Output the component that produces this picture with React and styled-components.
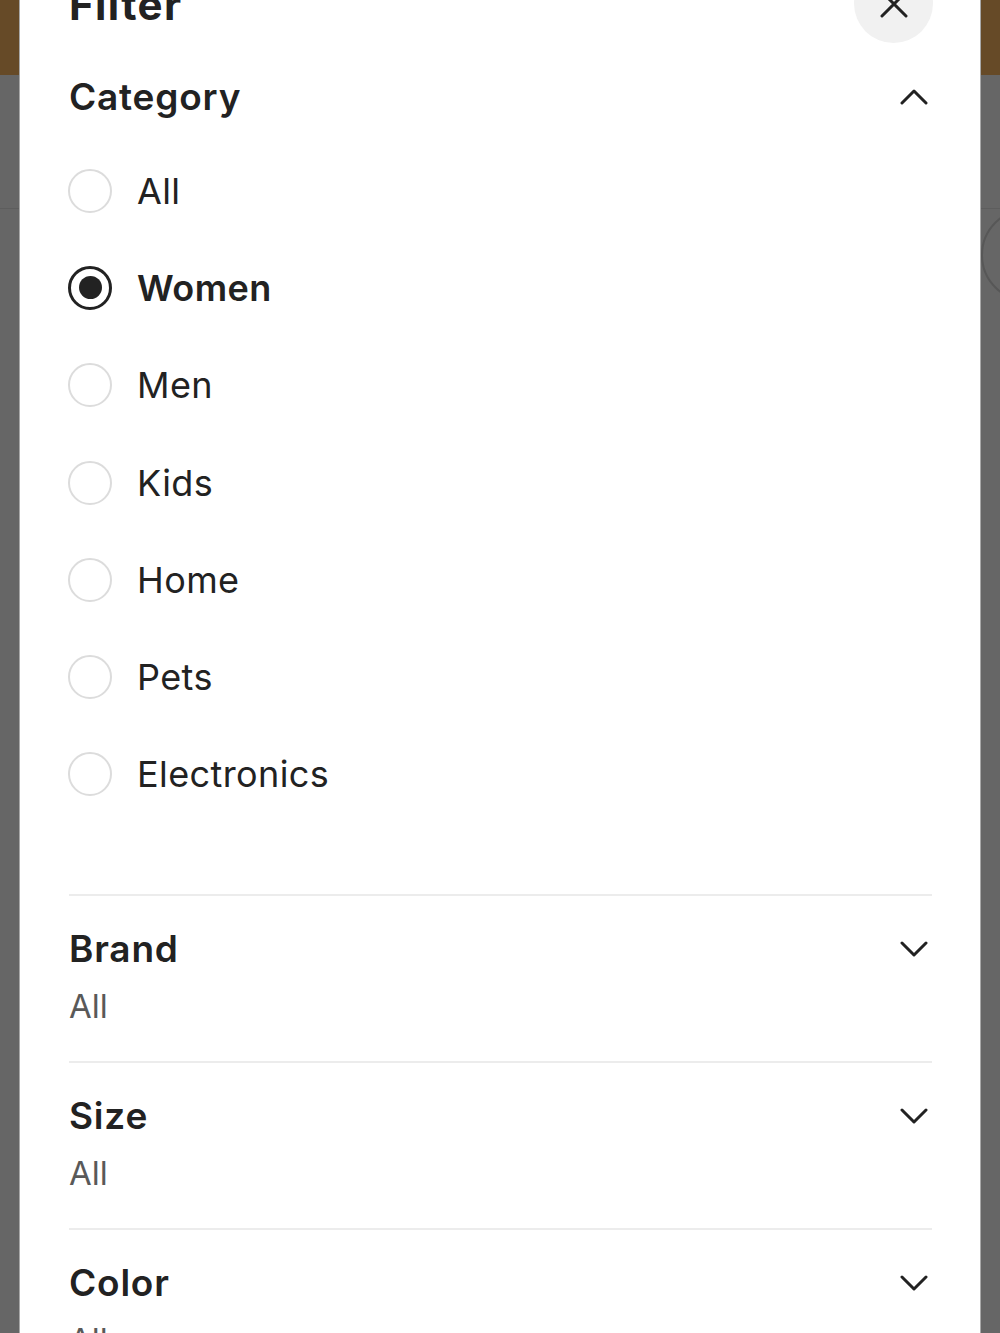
import React from "react";
import styled, { createGlobalStyle } from "styled-components";

const GlobalStyle = createGlobalStyle`
  html, body {
    margin: 0;
    padding: 0;
    background: #666666;
  }
  body {
    font-family: Inter, "Noto Sans", "Liberation Sans", sans-serif;
    color: #222222;
    -webkit-font-smoothing: antialiased;
  }
  * {
    box-sizing: border-box;
  }
`;

const categories = ["All", "Women", "Men", "Kids", "Home", "Pets", "Electronics"];
const sections = ["Brand", "Size", "Color"];

const Chevron = ({ up }) => (
  <svg width="28" height="16" viewBox="0 0 28 16" fill="none">
    <polyline
      points={up ? "2,14 14,2 26,14" : "2,2 14,14 26,2"}
      stroke="#222"
      strokeWidth="3"
      strokeLinecap="round"
      strokeLinejoin="round"
    />
  </svg>
);

const CloseIcon = () => (
  <svg width="28" height="28" viewBox="0 0 28 28" fill="none">
    <path d="M2 2 L26 26 M26 2 L2 26" stroke="#222" strokeWidth="3" strokeLinecap="round" />
  </svg>
);

export default function App() {
  return (
    <>
      <GlobalStyle />
      <Page>
        <TopBar />
        <NavRow>
          <GhostCircle />
        </NavRow>
        <Sheet>
          <Header>
            <Title>Filter</Title>
            <CloseButton aria-label="Close">
              <CloseIcon />
            </CloseButton>
          </Header>

          <CategoryBlock>
            <SectionHead>
              <Heading>Category</Heading>
              <IconBox>
                <Chevron up />
              </IconBox>
            </SectionHead>
            <RadioList>
              {categories.map((c) => (
                <RadioRow key={c}>
                  <Radio $checked={c === "Women"} />
                  <RadioLabel $checked={c === "Women"}>{c}</RadioLabel>
                </RadioRow>
              ))}
            </RadioList>
          </CategoryBlock>

          {sections.map((s) => (
            <Section key={s}>
              <SectionHead>
                <Heading>{s}</Heading>
                <IconBox>
                  <Chevron />
                </IconBox>
              </SectionHead>
              <Value>All</Value>
            </Section>
          ))}
        </Sheet>
      </Page>
    </>
  );
}

const Page = styled.div`
  position: relative;
  height: 1333px;
  overflow: hidden;
  background: #666666;
`;

const TopBar = styled.div`
  height: 75px;
  background: #664a27;
`;

const NavRow = styled.div`
  height: 112px;
  border-bottom: 1px solid #5d5d5d;
  display: flex;
  justify-content: flex-end;
  align-items: flex-start;
  padding-top: 133px;
`;

const GhostCircle = styled.div`
  flex: none;
  width: 94px;
  height: 94px;
  border-radius: 50%;
  border: 2px solid #575757;
  margin-right: -75px;
`;

const Sheet = styled.div`
  position: absolute;
  top: -60px;
  left: 19px;
  right: 19px;
  bottom: 0;
  background: #ffffff;
  border-left: 1px solid #a8a8a8;
  border-right: 1px solid #a8a8a8;
  padding: 24px 48px 0 49px;
`;

const Header = styled.div`
  display: flex;
  align-items: center;
  justify-content: space-between;
  height: 79px;
`;

const Title = styled.h1`
  margin: 0;
  font-size: 42px;
  font-weight: 700;
  letter-spacing: 1.4px;
  line-height: 1;
  padding-top: 2px;
`;

const CloseButton = styled.button`
  width: 79px;
  height: 79px;
  border-radius: 50%;
  border: none;
  background: #f1f1f1;
  display: flex;
  align-items: center;
  justify-content: center;
  padding: 0;
  margin-right: -1px;
`;

const CategoryBlock = styled.div`
  margin-top: 32px;
  padding-bottom: 71px;
`;

const SectionHead = styled.div`
  display: flex;
  align-items: center;
  justify-content: space-between;
  height: 44px;
`;

const Heading = styled.h2`
  margin: 0;
  font-size: 37px;
  font-weight: 600;
  letter-spacing: 0.8px;
  line-height: 44px;
  color: #222;
`;

const IconBox = styled.div`
  width: 32px;
  display: flex;
  justify-content: center;
  margin-right: 2px;
`;

const RadioList = styled.div`
  display: flex;
  flex-direction: column;
  padding-top: 23px;
`;

const RadioRow = styled.label`
  display: flex;
  align-items: center;
  gap: 25px;
  height: 97.3px;
  margin-left: -1px;
`;

const Radio = styled.span`
  flex: none;
  width: 44px;
  height: 44px;
  border-radius: 50%;
  border: ${(p) => (p.$checked ? "3.5px solid #222" : "2px solid #dcdcdc")};
  display: flex;
  align-items: center;
  justify-content: center;
  &::after {
    content: "";
    display: ${(p) => (p.$checked ? "block" : "none")};
    width: 23px;
    height: 23px;
    border-radius: 50%;
    background: #222;
  }
`;

const RadioLabel = styled.span`
  font-size: 36px;
  font-weight: ${(p) => (p.$checked ? 600 : 400)};
  letter-spacing: 0.4px;
  color: #222;
  line-height: 1;
`;

const Section = styled.div`
  border-top: 2px solid #ececec;
  padding: 31px 0 35px;
`;

const Value = styled.div`
  margin-top: 15px;
  font-size: 33px;
  line-height: 40px;
  color: #595959;
`;
